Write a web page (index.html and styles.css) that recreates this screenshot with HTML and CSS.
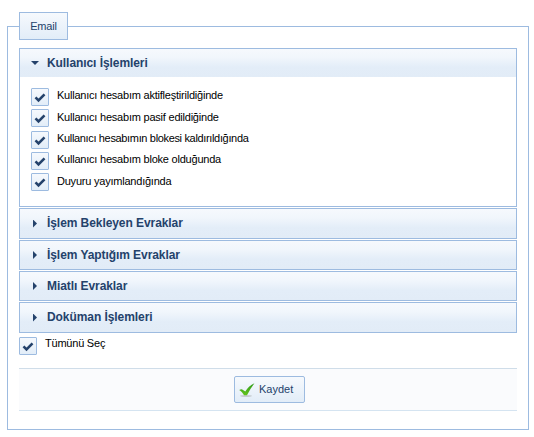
FILE: index.html
```
<!DOCTYPE html>
<html lang="tr">
<head>
    <meta charset="UTF-8">
    <title>Email</title>
    <link rel="stylesheet" href="styles.css">
</head>
<body>
    <svg width="0" height="0" class="sprite">
        <symbol id="check" viewBox="0 0 12 12">
            <path d="M1.5 6.4 L4.5 9.4 L10.5 3.4" fill="none" stroke="#24426b" stroke-width="2.6"/>
        </symbol>
    </svg>

    <div class="fieldset">
        <div class="legend">Email</div>

        <div class="accordion">
            <div class="header active"><span class="arrow down"></span><span class="title">Kullanıcı İşlemleri</span></div>
            <div class="pane">
                <div class="row"><span class="chkbox"><svg><use href="#check"/></svg></span><label>Kullanıcı hesabım aktifleştirildiğinde</label></div>
                <div class="row"><span class="chkbox"><svg><use href="#check"/></svg></span><label class="low">Kullanıcı hesabım pasif edildiğinde</label></div>
                <div class="row"><span class="chkbox"><svg><use href="#check"/></svg></span><label class="tight">Kullanıcı hesabımın blokesi kaldırıldığında</label></div>
                <div class="row"><span class="chkbox"><svg><use href="#check"/></svg></span><label>Kullanıcı hesabım bloke olduğunda</label></div>
                <div class="row"><span class="chkbox"><svg><use href="#check"/></svg></span><label class="low">Duyuru yayımlandığında</label></div>
            </div>
            <div class="header tall"><span class="arrow"></span><span class="title">İşlem Bekleyen Evraklar</span></div>
            <div class="header"><span class="arrow"></span><span class="title">İşlem Yaptığım Evraklar</span></div>
            <div class="header"><span class="arrow"></span><span class="title">Miatlı Evraklar</span></div>
            <div class="header tall"><span class="arrow"></span><span class="title">Doküman İşlemleri</span></div>
        </div>

        <div class="row select-all"><span class="chkbox"><svg><use href="#check"/></svg></span><label>Tümünü Seç</label></div>

        <div class="footer">
            <button class="save" type="button">
                <svg width="16" height="16" viewBox="0 0 16 16">
                    <defs>
                        <linearGradient id="green" x1="0" y1="0" x2="0" y2="1">
                            <stop offset="0" stop-color="#2f9a1c"/>
                            <stop offset="1" stop-color="#62c41c"/>
                        </linearGradient>
                    </defs>
                    <ellipse cx="7" cy="14" rx="6" ry="0.9" fill="#c5cbd0"/>
                    <path d="M0.2 8 C1.8 7 3.2 7 4 8 L6.3 9.4 C8.8 5.6 11.6 3 15.4 1.2 C12.6 5 10.2 9 8 13.2 L5 13.2 C3.9 11 2.2 9.4 0.2 8 Z" fill="url(#green)"/>
                </svg>
                <span>Kaydet</span>
            </button>
        </div>
    </div>
</body>
</html>
```

FILE: styles.css
```
* {
    margin: 0;
    padding: 0;
    box-sizing: border-box;
}

body {
    background: #fff;
    font-family: "Liberation Sans", Arial, sans-serif;
    font-size: 11px;
    color: #000;
    overflow: hidden;
}

.sprite {
    display: block;
}

.fieldset {
    width: 522px;
    height: 404px;
    margin: 26px 0 0 7px;
    padding: 0 11px;
    border: 1px solid #9dbbe0;
}

.legend {
    width: 49px;
    height: 28px;
    margin-top: -15px;
    border: 1px solid #9dbbe0;
    background: linear-gradient(#f6f9fd, #e2edf8);
    color: #24426b;
    letter-spacing: -0.2px;
    line-height: 27px;
    text-align: center;
}

.accordion {
    margin-top: 8px;
}

.header {
    display: flex;
    align-items: center;
    height: 30px;
    margin-bottom: 1px;
    padding-left: 12px;
    border: 1px solid #9dbbe0;
    background: linear-gradient(#f6f9fd 0%, #f1f6fc 30%, #e3edf8 65%, #e2ecf7 100%);
    color: #24426b;
    font-size: 12px;
    font-weight: bold;
    letter-spacing: -0.07px;
    white-space: nowrap;
}

.header.tall {
    height: 31px;
}

.header.tall .title {
    margin-bottom: 2px;
}

.header.active {
    height: 29px;
    margin-bottom: 0;
    border-bottom: none;
}

.header:last-child {
    margin-bottom: 0;
}

.arrow {
    width: 4px;
    height: 8px;
    margin: 0 10px 0 1px;
    background: #24426b;
    clip-path: polygon(0 0, 100% 50%, 0 100%);
}

.arrow.down {
    width: 8px;
    height: 4px;
    margin: 0 8px 0 -1px;
    clip-path: polygon(0 0, 100% 0, 50% 100%);
}

.pane {
    height: 130px;
    margin-bottom: 1px;
    padding: 11px 11px 0;
    border: 1px solid #9dbbe0;
    border-top: none;
}

.row {
    display: flex;
    height: 21.3px;
}

.row label {
    margin-left: 8px;
    letter-spacing: -0.22px;
    line-height: 15px;
    white-space: nowrap;
}

.row label.low {
    margin-top: 1px;
}

.row label.tight {
    letter-spacing: -0.34px;
}

.chkbox {
    display: flex;
    align-items: center;
    justify-content: center;
    width: 18px;
    height: 18px;
    border: 1px solid #9dbbe0;
    border-radius: 1px;
    background: linear-gradient(#f6f9fd, #e2edf8);
}

.chkbox svg {
    width: 12px;
    height: 12px;
}

.select-all {
    height: 18px;
    margin-top: 4px;
}

.select-all label {
    line-height: 13px;
}

.footer {
    display: flex;
    justify-content: center;
    height: 43px;
    margin-top: 13px;
    padding: 7px 0 0 3px;
    border-top: 1px solid #cfdde9;
    border-bottom: 1px solid #d5e4f1;
    background: #fafbfd;
}

.save {
    display: flex;
    align-items: center;
    width: 71px;
    height: 27px;
    padding-left: 4px;
    border: 1px solid #9dbbe0;
    border-radius: 2px;
    background: linear-gradient(#f6f9fd, #e2edf8);
    color: #24426b;
    font: 11px "Liberation Sans", Arial, sans-serif;
}

.save span {
    margin: 0 0 2px 4px;
}
```
